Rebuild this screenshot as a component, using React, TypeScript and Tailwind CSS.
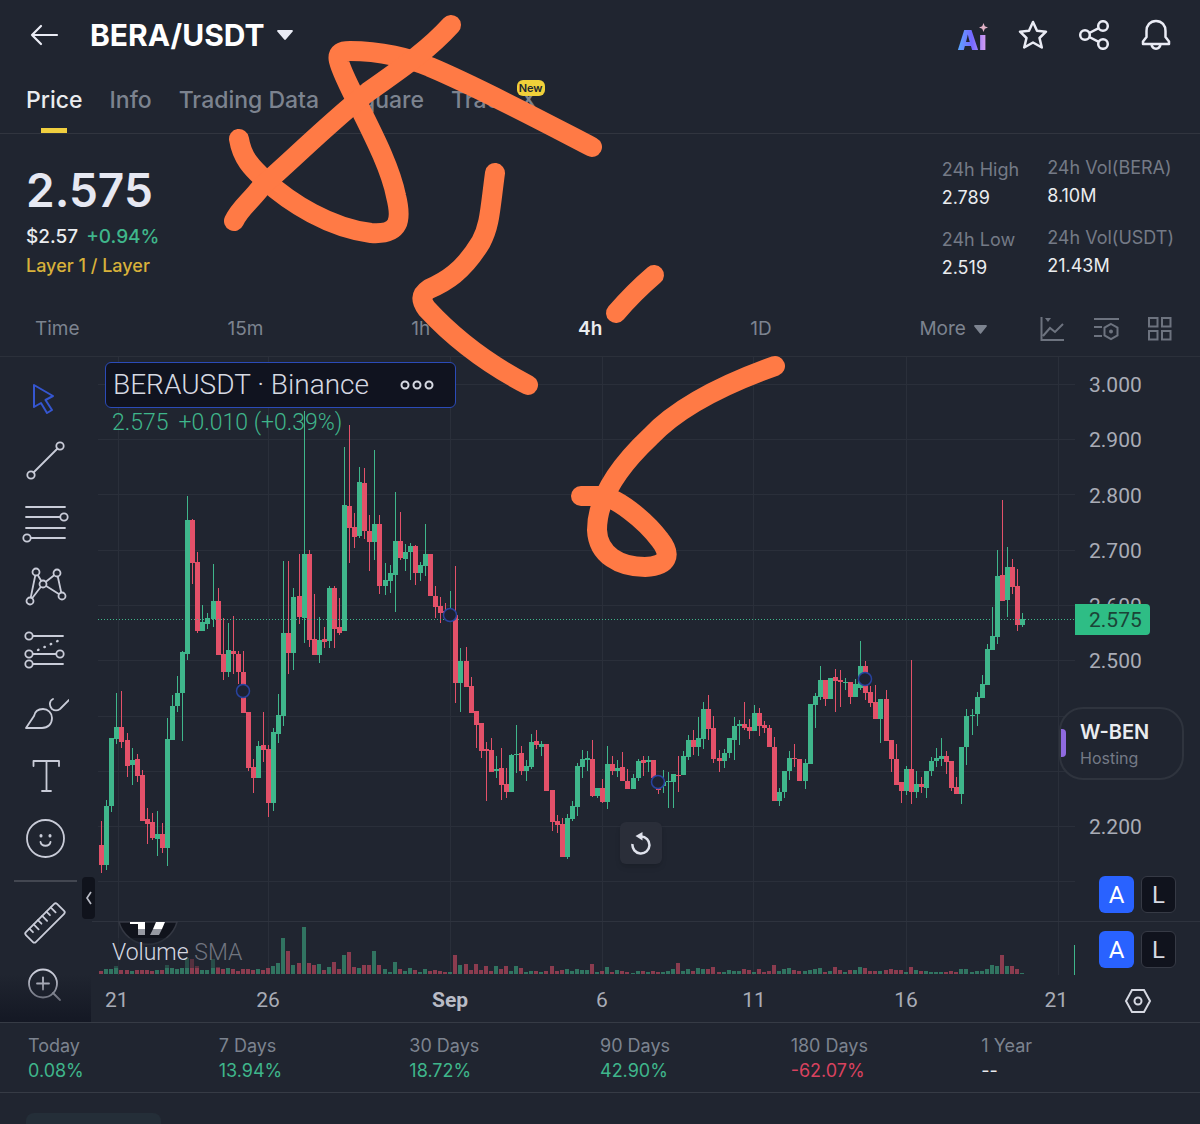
import React from 'react';

const UP = '#3fb68b';
const DOWN = '#e35169';

// [high, body top, body bottom, low, direction, volume] in plot units
type Candle = [number, number, number, number, 0 | 1, number];

const CANDLES: Candle[] = [
  [821, 845, 865, 873, 0, 3], [800, 806, 865, 870, 1, 5], [738, 738, 806, 812, 1, 5], [693, 727, 739, 744, 1, 8],
  [691, 727, 742, 748, 0, 4], [733, 740, 766, 777, 0, 4], [748, 760, 765, 785, 1, 3], [754, 759, 776, 782, 0, 4],
  [770, 775, 821, 821, 0, 4], [808, 819, 824, 844, 0, 4], [813, 822, 838, 840, 0, 3], [811, 834, 839, 856, 1, 4],
  [823, 834, 848, 853, 0, 4], [718, 739, 848, 866, 1, 9], [695, 706, 740, 740, 1, 6], [676, 693, 706, 712, 1, 5],
  [651, 652, 693, 741, 1, 6], [496, 520, 654, 660, 1, 16], [519, 520, 563, 584, 0, 15], [552, 562, 631, 633, 0, 8],
  [605, 622, 631, 631, 1, 4], [613, 618, 624, 629, 1, 4], [564, 601, 619, 627, 1, 15], [588, 601, 655, 655, 0, 7],
  [618, 654, 672, 680, 0, 5], [623, 650, 672, 677, 1, 6], [616, 651, 654, 674, 0, 5], [651, 654, 672, 684, 0, 3],
  [651, 672, 713, 713, 0, 5], [712, 712, 768, 771, 0, 5], [759, 767, 778, 793, 0, 4], [741, 746, 778, 778, 1, 5],
  [712, 745, 750, 762, 0, 4], [745, 749, 803, 817, 0, 6], [728, 732, 803, 811, 1, 8], [694, 715, 734, 743, 1, 11],
  [561, 633, 716, 726, 1, 36], [561, 633, 653, 674, 0, 23], [588, 597, 653, 670, 1, 9], [554, 596, 617, 624, 0, 11],
  [411, 554, 618, 643, 1, 47], [550, 554, 640, 647, 0, 11], [594, 639, 655, 655, 0, 9], [617, 640, 655, 663, 1, 10],
  [627, 639, 642, 648, 0, 4], [586, 588, 641, 648, 1, 7], [586, 588, 629, 648, 0, 12], [598, 627, 633, 635, 0, 5],
  [447, 505, 631, 631, 1, 19], [425, 506, 528, 563, 0, 22], [513, 527, 537, 548, 0, 7], [467, 482, 536, 538, 1, 6],
  [468, 483, 531, 539, 0, 9], [515, 531, 542, 571, 0, 9], [450, 524, 542, 560, 1, 23], [515, 524, 586, 594, 0, 9],
  [563, 580, 586, 595, 1, 5], [565, 573, 581, 593, 1, 2], [492, 541, 575, 612, 1, 12], [512, 541, 558, 560, 0, 5],
  [544, 552, 559, 571, 1, 3], [543, 546, 552, 580, 1, 6], [545, 546, 573, 585, 0, 4], [562, 565, 573, 581, 1, 2],
  [524, 554, 566, 576, 1, 5], [554, 554, 596, 596, 0, 3], [586, 596, 607, 618, 0, 4], [597, 606, 613, 623, 0, 3],
  [603, 611, 617, 620, 0, 2], [591, 613, 620, 620, 1, 2], [566, 615, 683, 703, 0, 19], [648, 661, 683, 712, 1, 9],
  [647, 661, 687, 687, 0, 10], [677, 686, 713, 713, 0, 4], [711, 711, 725, 748, 0, 10], [723, 723, 751, 758, 0, 4],
  [742, 749, 751, 801, 0, 8], [738, 750, 772, 772, 0, 3], [756, 769, 771, 778, 1, 8], [748, 768, 785, 800, 0, 5],
  [768, 784, 792, 798, 0, 8], [754, 755, 792, 792, 1, 3], [725, 754, 755, 773, 1, 8], [746, 753, 771, 775, 0, 6],
  [760, 766, 771, 781, 1, 2], [734, 742, 767, 769, 1, 3], [730, 741, 745, 749, 0, 3], [741, 744, 747, 756, 1, 2],
  [744, 744, 791, 791, 0, 3], [790, 790, 822, 831, 0, 8], [815, 821, 825, 833, 0, 3], [818, 824, 857, 857, 0, 4],
  [814, 818, 857, 859, 1, 5], [801, 806, 819, 821, 1, 3], [763, 766, 807, 816, 1, 5], [750, 759, 767, 778, 1, 4],
  [751, 758, 760, 771, 1, 4], [740, 759, 796, 797, 0, 10], [788, 788, 796, 798, 1, 2], [779, 788, 802, 803, 0, 3],
  [746, 764, 802, 809, 1, 7], [756, 764, 771, 775, 0, 2], [760, 768, 771, 777, 1, 4], [752, 767, 781, 781, 0, 3],
  [769, 781, 789, 789, 0, 2], [774, 778, 789, 789, 1, 1], [759, 761, 778, 781, 1, 3], [756, 760, 763, 776, 0, 3],
  [756, 760, 762, 772, 1, 2], [760, 760, 778, 780, 0, 3], [780, 780, 790, 794, 0, 2], [770, 782, 786, 793, 1, 2],
  [772, 781, 782, 808, 1, 3], [774, 774, 782, 808, 1, 5], [756, 775, 776, 792, 0, 11], [751, 756, 775, 775, 1, 3],
  [735, 740, 757, 760, 1, 5], [730, 740, 747, 755, 0, 3], [717, 738, 747, 756, 1, 6], [702, 709, 739, 749, 1, 5],
  [695, 709, 729, 740, 0, 5], [716, 728, 759, 763, 0, 7], [750, 758, 761, 772, 0, 2], [749, 753, 761, 768, 1, 2],
  [738, 738, 753, 758, 1, 4], [717, 726, 740, 760, 1, 3], [720, 724, 726, 745, 1, 3], [702, 724, 728, 730, 0, 5],
  [719, 727, 731, 739, 0, 4], [705, 713, 731, 731, 1, 2], [708, 713, 726, 736, 0, 5], [721, 725, 728, 733, 0, 2],
  [725, 728, 747, 747, 0, 3], [737, 747, 801, 801, 0, 9], [788, 792, 801, 806, 1, 3], [771, 771, 792, 798, 1, 5],
  [751, 758, 771, 780, 1, 6], [744, 758, 759, 767, 0, 4], [759, 759, 781, 781, 0, 3], [759, 763, 781, 789, 1, 3],
  [704, 704, 764, 764, 1, 4], [693, 696, 705, 728, 1, 5], [666, 680, 697, 700, 1, 6], [680, 680, 699, 706, 0, 2],
  [678, 678, 699, 699, 1, 3], [669, 677, 681, 712, 0, 7], [670, 680, 682, 707, 0, 4], [678, 682, 683, 690, 1, 2],
  [682, 682, 697, 704, 0, 4], [679, 684, 697, 697, 1, 4], [641, 666, 688, 690, 1, 7], [661, 666, 693, 700, 0, 6],
  [686, 692, 703, 707, 0, 3], [685, 702, 719, 719, 0, 3], [699, 699, 719, 743, 1, 3], [690, 699, 741, 741, 0, 4],
  [740, 740, 759, 772, 0, 5], [744, 759, 785, 785, 0, 4], [782, 782, 791, 803, 0, 4], [766, 769, 791, 795, 1, 2],
  [660, 769, 792, 804, 0, 7], [771, 784, 792, 798, 1, 4], [777, 784, 787, 793, 0, 3], [771, 771, 788, 798, 1, 3],
  [757, 761, 771, 776, 1, 2], [748, 758, 761, 767, 1, 2], [738, 756, 759, 766, 1, 2], [751, 756, 762, 774, 0, 2],
  [761, 761, 788, 791, 0, 3], [777, 787, 794, 794, 0, 2], [747, 747, 794, 804, 1, 5], [709, 716, 747, 765, 1, 5],
  [709, 715, 716, 735, 1, 2], [692, 697, 714, 726, 1, 3], [675, 684, 698, 698, 1, 3], [644, 649, 685, 685, 1, 5],
  [607, 636, 650, 650, 1, 9], [550, 576, 637, 644, 1, 8], [500, 575, 601, 601, 0, 19], [547, 567, 600, 617, 1, 8],
  [559, 567, 587, 594, 0, 8], [569, 586, 625, 631, 0, 5], [613, 619, 625, 627, 1, 1],
];

const GRID_X = [118, 268, 450, 602, 753, 906, 1058];
const GRID_Y = [384, 439, 494, 550, 605, 660, 716, 771, 826, 881];
const MARKERS = [[243, 691], [450, 615], [658, 782], [865, 679]];
const PRICE_LABELS = ['3.000', '2.900', '2.800', '2.700', '2.600', '2.500', '', '', '2.200'];

const STATS = [
  { label: 'Today', value: '0.08%', tone: 'text-[#3fb68b]' },
  { label: '7 Days', value: '13.94%', tone: 'text-[#3fb68b]' },
  { label: '30 Days', value: '18.72%', tone: 'text-[#3fb68b]' },
  { label: '90 Days', value: '42.90%', tone: 'text-[#3fb68b]' },
  { label: '180 Days', value: '-62.07%', tone: 'text-[#d9425f]' },
  { label: '1 Year', value: '--', tone: 'text-[#eaecef]' },
];

const TOOLS = [
  {
    name: 'Cursor',
    tone: 'text-[#3556d0]',
    icon: <path d="M13 11 32 22l-7.500 4L31 36l-5 3-6-10-7 4Z" strokeWidth="2" />,
  },
  {
    name: 'Trend line',
    icon: <><path d="M12.500 35.500 36.500 11.500" /><circle cx="39" cy="9" r="3.700" /><circle cx="10" cy="38" r="3.700" /></>,
  },
  {
    name: 'Fib retracement',
    icon: <><path d="M5 7h39M5 17h34M5 28h39M10 38h34" /><circle cx="43" cy="17" r="3.700" /><circle cx="6" cy="38" r="3.700" /></>,
  },
  {
    name: 'Patterns',
    icon: (
      <>
        <path d="M15 9 9 38 22 21ZM22 21 36 10l5 23Z" />
        <g fill="#202530">
          <circle cx="15" cy="9" r="3.500" /><circle cx="36" cy="10" r="3.500" /><circle cx="22" cy="21" r="3.500" />
          <circle cx="9" cy="38" r="3.500" /><circle cx="41" cy="33" r="3.500" />
        </g>
      </>
    ),
  },
  {
    name: 'Long position',
    icon: (
      <>
        <path d="M12 10h30M12 28h23M12 38h30" />
        <path d="M17 24 41 13" strokeDasharray="0.500 6.500" strokeWidth="2.400" />
        <circle cx="8" cy="10" r="3.700" /><circle cx="8" cy="28" r="3.700" /><circle cx="39" cy="28" r="3.700" /><circle cx="8" cy="38" r="3.700" />
      </>
    ),
  },
  {
    name: 'Brush',
    icon: <path d="M5 39 13 27C14 22 18 20 22 20c5 0 9 4 9 9 0 6-4 10-10 10ZM32 10c-4 2-4 7-1 10 3 2 5 2 8 0l9-9" />,
  },
  { name: 'Text', icon: <path d="M12.500 14V9h25.500v5M25.500 9v30M21 39h9" /> },
  {
    name: 'Emoji',
    icon: <><circle cx="24.500" cy="23.500" r="18.500" /><path d="M19.500 27c1 5 9 5 10 0" /><path d="M20 20.500v.500M29 20.500v.500" strokeWidth="3" /></>,
  },
];

const EXTRA_TOOLS = [
  {
    name: 'Measure',
    icon: (
      <g transform="rotate(-45 24 25)">
        <rect x="2" y="18" width="44" height="14" rx="2" />
        <path d="M9 18v5M15 18v7M21 18v5M27 18v7M33 18v5M39 18v7" />
      </g>
    ),
  },
  { name: 'Zoom in', icon: <><circle cx="22" cy="22.500" r="14" /><path d="M22 16.500v12M16 22.500h12M32 32l7 7" /></> },
];

const ToolButton: React.FC<{ name: string; tone?: string; children: React.ReactNode }> = ({ name, tone, children }) => (
  <button aria-label={name} className={`flex h-[63px] w-[90px] shrink-0 items-center justify-center ${tone ?? 'text-[#c9ccd8]'}`}>
    <svg width="48" height="48" viewBox="0 0 48 48" fill="none" stroke="currentColor" strokeWidth="1.800" strokeLinecap="round" strokeLinejoin="round">
      {children}
    </svg>
  </button>
);

const ScaleButtons: React.FC = () => (
  <div className="flex gap-[7px] text-2xl text-[#d6d9e2]">
    <button className="flex h-[37px] w-[35px] items-center justify-center rounded-md bg-[#2962ff] text-white">A</button>
    <button className="flex h-[37px] w-[35px] items-center justify-center rounded-md border border-[#363a45] bg-[#10131d]">L</button>
  </div>
);

const Header: React.FC = () => (
  <header className="flex h-[70px] items-center justify-between pr-7 pl-7">
    <div className="flex items-center">
      <button aria-label="Back">
        <svg width="32" height="24" viewBox="0 0 32 24" fill="none" stroke="#eaecf5" strokeWidth="2.200" strokeLinecap="round" strokeLinejoin="round">
          <path d="M29 12H4M13 3 4 12l9 9" />
        </svg>
      </button>
      <button className="ml-[30px] flex items-center gap-3 text-3xl font-bold text-white">
        BERA/USDT
        <svg width="16" height="10" viewBox="0 0 16 10" fill="#eaecf5"><path d="M1 0h14a1 1 0 0 1 .7 1.600L9 9.300a1.300 1.300 0 0 1-2 0L.3 1.600A1 1 0 0 1 1 0Z" /></svg>
      </button>
    </div>
    <div className="flex items-center gap-[30px]">
      <button aria-label="Ai" className="relative h-8 w-[32px] pt-1 text-[27px] leading-9 font-black">
        <span className="bg-linear-to-r from-[#55a8ff] via-[#7467ff] to-[#e0a0f0] bg-clip-text text-transparent">Aı</span>
        <svg className="absolute top-1 right-0" width="9" height="9" viewBox="0 0 9 9" fill="#e3b3c8"><path d="M4.500 0 5.800 3.200 9 4.500 5.800 5.800 4.500 9 3.200 5.800 0 4.500 3.200 3.200Z" /></svg>
      </button>
      <button aria-label="Favourite">
        <svg width="30" height="30" viewBox="0 0 30 30" fill="none" stroke="#eaecf5" strokeWidth="2.500" strokeLinejoin="round">
          <path d="m15 2 4 8.700 9 1-6.500 6.300 2.300 9.500L15 22.500 6.200 27.500 8.500 18 2 11.700l9-1Z" />
        </svg>
      </button>
      <button aria-label="Share">
        <svg width="32" height="30" viewBox="0 0 32 30" fill="none" stroke="#eaecf5" strokeWidth="2.500">
          <circle cx="7" cy="15" r="4.800" /><circle cx="25" cy="6" r="4.800" /><circle cx="25" cy="24" r="4.800" /><path d="m11.300 13 9.400-4.800M11.300 17l9.400 4.800" />
        </svg>
      </button>
      <button aria-label="Alerts">
        <svg width="32" height="32" viewBox="0 0 32 32" fill="none" stroke="#eaecf5" strokeWidth="2.500" strokeLinejoin="round">
          <path d="M16 2c-6 0-9.500 4.500-9.500 10v6L3 22.500V25h26v-2.500L25.500 18v-6C25.500 6.500 22 2 16 2ZM11.500 25.500c1 5.500 8 5.500 9 0" />
        </svg>
      </button>
    </div>
  </header>
);

const Tabs: React.FC = () => (
  <nav className="flex h-16 gap-[27px] border-b border-[#31353f] pl-[26px] text-[23px] leading-[60px] font-medium text-[#7c838f]">
    <a href="#price" className="relative text-[#eaecef]">
      Price
      <span className="absolute bottom-0 left-1/2 h-[5px] w-[26px] -translate-x-1/2 bg-[#f0cf3f]" />
    </a>
    <a href="#info">Info</a>
    <a href="#data">Trading Data</a>
    <a href="#square">Square</a>
    <a href="#tradex" className="relative">
      Trade X
      <span className="absolute top-[10px] -right-2 rounded-md bg-[#f0d03a] px-[2px] text-[11px] leading-4 font-semibold text-[#202530]">New</span>
    </a>
  </nav>
);

const Stat: React.FC<{ label: string; value: string }> = ({ label, value }) => (
  <div>
    <dt className="text-[#747a86]">{label}</dt>
    <dd className="text-[#eaecef]">{value}</dd>
  </div>
);

const Summary: React.FC = () => (
  <section className="flex h-[168px] justify-between pr-[26px] pl-[26px]">
    <div className="pt-7">
      <p className="text-[46px] leading-[56px] font-semibold text-[#e6e8f2]">2.575</p>
      <p className="mt-[5px] flex gap-2 text-[19px] leading-7 font-medium text-[#eaecef]">
        $2.57 <span className="text-[#3fb68b]">+0.94%</span>
      </p>
      <p className="text-lg leading-[30px] font-medium text-[#d8b13a]">Layer 1 / Layer</p>
    </div>
    <div className="flex gap-7 text-lg leading-7">
      <dl className="flex flex-col gap-[14px] pt-[22px]">
        <Stat label="24h High" value="2.789" />
        <Stat label="24h Low" value="2.519" />
      </dl>
      <dl className="flex flex-col gap-[14px] pt-5">
        <Stat label="24h Vol(BERA)" value="8.10M" />
        <Stat label="24h Vol(USDT)" value="21.43M" />
      </dl>
    </div>
  </section>
);

const Timeframes: React.FC = () => (
  <div className="flex h-[55px] items-center border-b border-[#2b303a] pr-7 pl-[35px] text-[19px] text-[#7c838f]">
    <div className="flex flex-1 items-center justify-between">
      <button>Time</button>
      <button>15m</button>
      <button>1h</button>
      <button className="font-semibold text-[#eaecef]">4h</button>
      <button>1D</button>
      <button className="flex items-center gap-2">
        More
        <svg width="13" height="9" viewBox="0 0 13 9" fill="currentColor"><path d="M1 0h11a1 1 0 0 1 .7 1.600L7.300 8.300a1 1 0 0 1-1.600 0L.3 1.600A1 1 0 0 1 1 0Z" /></svg>
      </button>
    </div>
    <div className="ml-[53px] flex gap-[29px] text-[#6d737f]">
      <button aria-label="Indicators">
        <svg width="25" height="26" viewBox="0 0 25 26" fill="none" stroke="currentColor" strokeWidth="2">
          <path d="M1.500 1v23H24M3 20l7-8 5 4 8-8" /><path d="M5 2h6L8 6Z" fill="currentColor" stroke="none" />
        </svg>
      </button>
      <button aria-label="Chart settings">
        <svg width="25" height="26" viewBox="0 0 25 26" fill="none" stroke="currentColor" strokeWidth="2">
          <path d="M0 3h25M0 11h8M0 20h8M17 8l6.500 3.700v7.600L17 23l-6.500-3.700v-7.600Z" /><circle cx="17" cy="15.500" r="2" fill="currentColor" stroke="none" />
        </svg>
      </button>
      <button aria-label="Layout">
        <svg width="24" height="26" viewBox="0 0 24 26" fill="none" stroke="currentColor" strokeWidth="2">
          <path d="M1 2h8.500v8.500H1ZM14 2h8.500v8.500H14ZM1 15h8.500v8.500H1ZM14 15h8.500v8.500H14Z" />
        </svg>
      </button>
    </div>
  </div>
);

const Plot: React.FC = () => (
  <svg className="block h-auto w-full" viewBox="92 357 983 618" shapeRendering="crispEdges">
    {GRID_X.map((x) => <rect key={x} x={x} y={357} width={1} height={618} fill="#2a2f3a" />)}
    {GRID_Y.map((y) => <rect key={y} x={98} y={y} width={977} height={1} fill="#2a2f3a" />)}
    <rect x={92} y={921} width={983} height={1} fill="#2e333e" />
    <g shapeRendering="auto">
      <path d="M119 922a30 30 0 0 0 58 0Z" fill="#10131c" stroke="#343843" strokeWidth="1.500" />
      <path d="M130 922h15v7h-7v-5h-8ZM156 922h9l-3 7h-9Z" fill="#fff" />
      <path d="M138 929h7v6h-7ZM153 929h9l-3 6h-9Z" fill="#9699a2" />
    </g>
    {CANDLES.map(([high, top, bottom, low, up, vol], i) => {
      const x = Math.round(101.2 + i * 5.06);
      return (
        <g key={i} fill={up ? UP : DOWN}>
          <rect x={x} y={high} width={1} height={low - high} />
          <rect x={x - 2} y={top} width={5} height={Math.max(bottom - top, 1)} />
          <rect x={x - 2} y={974 - vol} width={4} height={vol} opacity={0.55} />
        </g>
      );
    })}
    <path d="M98 619.5H1075" stroke={UP} strokeDasharray="1 2" shapeRendering="auto" />
    {MARKERS.map(([x, y]) => (
      <circle key={x} cx={x} cy={y} r={6.5} fill="#1c2233" stroke="#28439f" strokeWidth={1.5} shapeRendering="auto" />
    ))}
    <rect x={1074} y={945} width={1} height={30} fill={UP} />
  </svg>
);

const Chart: React.FC = () => (
  <section className="flex border-b border-[#363b45] font-['Roboto',sans-serif]">
    <div className="relative flex w-[92px] shrink-0 flex-col pt-[9px]">
      {TOOLS.map((t) => <ToolButton key={t.name} name={t.name} tone={t.tone}>{t.icon}</ToolButton>)}
      <hr className="mt-[10px] mb-2 ml-[14px] w-[63px] border-t-2 border-[#434751]" />
      {EXTRA_TOOLS.map((t) => <ToolButton key={t.name} name={t.name}>{t.icon}</ToolButton>)}
      <div className="pointer-events-none absolute bottom-0 left-0 h-12 w-[91px] bg-linear-to-t from-[#141824] to-transparent" />
    </div>

    <div className="relative min-w-0 flex-1">
      <Plot />
      <div className="absolute top-[5px] left-[13px]">
        <div className="flex h-[46px] w-[351px] items-center justify-between rounded-md border border-[#2b4bb8] bg-[#10131f] pr-5 pl-[7px] text-[28px] font-light text-[#d6d9e2]">
          BERAUSDT · Binance
          <button aria-label="More options">
            <svg width="36" height="12" viewBox="0 0 36 12" fill="none" stroke="#d6d9e2" strokeWidth="2"><circle cx="6" cy="6" r="3.500" /><circle cx="18" cy="6" r="3.500" /><circle cx="30" cy="6" r="3.500" /></svg>
          </button>
        </div>
        <p className="flex gap-[10px] pl-[7px] text-[23px] leading-[30px] font-light text-[#3fb68b]">
          <span>2.575</span>
          <span>+0.010 (+0.39%)</span>
        </p>
      </div>
      <p className="absolute top-[581px] left-5 bg-[#202530]/50 pr-1 text-[23px] leading-[30px] font-light text-[#70747f]">
        <span className="text-[#d6d9e2]">Volume</span> SMA
      </p>
      <button aria-label="Reset chart" className="absolute top-[465px] left-[528px] flex size-[42px] items-center justify-center rounded-md bg-[#2a2e39] shadow-md">
        <svg width="22" height="24" viewBox="0 0 22 24" fill="none" stroke="#dfe2ec" strokeWidth="2.500">
          <path d="M2.500 13A8.500 8.500 0 1 0 11 5.500" /><path d="M12.500 1v8.500L5.500 5Z" fill="#dfe2ec" stroke="none" />
        </svg>
      </button>
      <button aria-label="Hide toolbar" className="absolute top-[520px] -left-[10px] flex h-[42px] w-[13px] items-center justify-center rounded bg-[#10131c]">
        <svg width="7" height="14" viewBox="0 0 7 14" fill="none" stroke="#b9bcc6" strokeWidth="1.700"><path d="M6 1 2 7l4 6" /></svg>
      </button>
      <div className="grid h-[47px] grid-cols-[100fr_152fr_30fr_152fr_152fr_152fr_152fr_93fr] items-center pt-1 text-center text-[21px] text-[#a9acb6]">
        <span className="pl-[13px] text-left">21</span>
        <span>26</span>
        <span className="col-start-4 font-bold text-[#b9bcc6]">Sep</span>
        <span>6</span>
        <span>11</span>
        <span>16</span>
        <span className="pr-[7px] text-right">21</span>
      </div>
    </div>

    <div className="relative flex w-[125px] shrink-0 flex-col text-[21px] text-[#a9acb6]">
      <div className="flex h-[565px] flex-col justify-between border-b border-[#2e333e] pt-[15px] pb-2">
        <ul className="flex h-[468px] flex-col justify-between pl-[14px] leading-[26px]">
          {PRICE_LABELS.map((p, i) => <li key={i} className="h-[26px]">{p}</li>)}
        </ul>
        <div className="pl-6"><ScaleButtons /></div>
      </div>
      <div className="pt-[9px] pl-6"><ScaleButtons /></div>
      <button aria-label="Axis settings" className="mt-[19px] ml-[49px] flex h-[28px] w-7 items-center justify-center">
        <svg width="28" height="26" viewBox="0 0 28 26" fill="none" stroke="#d6d9e2" strokeWidth="2"><path d="M8 2h12l6 11-6 11H8L2 13Z" /><circle cx="14" cy="13" r="3.500" /></svg>
      </button>
      <span className="absolute top-[247px] left-0 h-[31px] w-[75px] rounded-r bg-[#2ebd85] pl-[14px] leading-[32px] text-[#1b4437]">2.575</span>
      <div className="absolute top-[350px] -left-4 h-[73px] w-[125px] rounded-3xl border-2 border-[#2f343e] bg-[#202530] pt-[9px] pl-[19px] font-['Inter',sans-serif]">
        <span className="absolute top-5 left-0 h-7 w-[5px] rounded-r bg-[#8f6ae0]" />
        <p className="text-xl leading-7 font-semibold text-[#eaecef]">W-BEN</p>
        <p className="text-base leading-6 text-[#747a86]">Hosting</p>
      </div>
    </div>
  </section>
);

// Freehand marks drawn over the page
const Markup: React.FC = () => (
  <svg className="pointer-events-none absolute top-0 left-0" width="800" height="600" viewBox="0 0 800 600" fill="none" stroke="#ff7a45" strokeWidth="20" strokeLinecap="round" strokeLinejoin="round">
    <path d="M239 139C242 158 252 168 265 180 290 203 330 228 371 233 400 235 402 220 396 196 390 165 368 125 355 98 335 58 333 51 350 51 380 51 410 58 430 67 480 88 540 120 592 147" />
    <path d="M451 25C430 48 408 64 368 92 330 122 290 162 262 186 250 202 240 208 234 221" />
    <path d="M495 173C490 210 490 225 481 242 463 272 445 282 429 289 420 295 421 301 427 309 450 334 480 360 528 385" />
    <path d="M654 275C640 287 628 299 616 313" />
    <path d="M775 366C730 382 680 405 650 437 615 470 597 500 597 530 598 555 620 567 645 567 668 566 672 555 660 540 645 520 615 496 600 496L581 496" />
  </svg>
);

const App: React.FC = () => (
  <main className="relative min-h-screen overflow-hidden bg-[#202530] font-['Inter',sans-serif]">
    <Header />
    <Tabs />
    <Summary />
    <Timeframes />
    <Chart />
    <dl className="grid h-[70px] grid-cols-6 items-center border-b border-[#363b45] px-7 text-lg leading-[25px]">
      {STATS.map((s) => (
        <div key={s.label}>
          <dt className="text-[#7c838f]">{s.label}</dt>
          <dd className={s.tone}>{s.value}</dd>
        </div>
      ))}
    </dl>
    <div className="mt-5 ml-[26px] h-3 w-[135px] rounded-t-lg bg-[#242e38]" />
    <Markup />
  </main>
);

export default App;
